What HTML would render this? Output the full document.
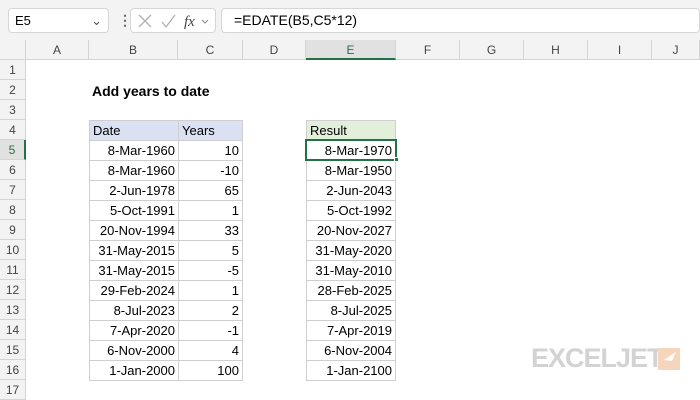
<!DOCTYPE html><html><head><style>
*{margin:0;padding:0;box-sizing:border-box}
body{width:700px;height:400px;overflow:hidden;background:#fff;font-family:"Liberation Sans",Calibri,sans-serif;font-size:13px;color:#000;position:relative}
.a{position:absolute}
.top{left:0;top:0;width:700px;height:40px;background:#f3f3f3}
.box{background:#fff;border:1px solid #d6d6d6;border-radius:4px}
.ch{top:40px;height:20px;background:#f3f3f3;border-right:1px solid #d4d4d4;border-bottom:1px solid #d4d4d4;text-align:center;line-height:20px;color:#444;font-size:12px}
.rh{left:0;width:26px;height:20px;background:#f3f3f3;border-bottom:1px solid #d4d4d4;border-right:1px solid #d4d4d4;text-align:center;line-height:20px;color:#444;font-size:12px}
.c{height:21px;border:1px solid #cfcfcf;line-height:19px;padding:0 3px;text-align:right;white-space:nowrap}
</style></head><body>
<div class="a top"></div>
<div class="a box" style="left:8px;top:8px;width:101px;height:25px;line-height:23px;padding-left:6px">E5<span class="a" style="right:6px;top:0;color:#555">&#8964;</span></div>
<div class="a" style="left:118px;top:12px;color:#666;font-size:14px;font-weight:bold">&#8942;</div>
<div class="a box" style="left:130px;top:8px;width:86px;height:25px"></div>
<svg class="a" style="left:134px;top:12px" width="80" height="18"><path d="M5 3l12 12M17 3L5 15" stroke="#b0b0b0" fill="none" stroke-width="1.3"/><path d="M28 10l4 5 9-12" stroke="#b0b0b0" fill="none" stroke-width="1.3"/><text x="50" y="14" font-family="Liberation Serif" font-style="italic" font-size="15" fill="#444">fx</text><path d="M68 8l3 3 3-3" stroke="#888" fill="none"/></svg>
<div class="a box" style="left:221px;top:8px;width:479px;height:25px;line-height:23px;padding-left:12px;font-size:14px">=EDATE(B5,C5*12)</div>
<div class="a" style="left:0;top:40px;width:26px;height:20px;background:#f3f3f3;border-right:1px solid #d4d4d4;border-bottom:1px solid #d4d4d4"></div>
<div class="a ch" style="left:26px;width:63px">A</div>
<div class="a ch" style="left:89px;width:89px">B</div>
<div class="a ch" style="left:178px;width:65px">C</div>
<div class="a ch" style="left:243px;width:63px">D</div>
<div class="a ch" style="left:306px;width:90px;background:#e1e1e1;border-bottom:2px solid #217346;color:#217346">E</div>
<div class="a ch" style="left:396px;width:64px">F</div>
<div class="a ch" style="left:460px;width:64px">G</div>
<div class="a ch" style="left:524px;width:64px">H</div>
<div class="a ch" style="left:588px;width:64px">I</div>
<div class="a ch" style="left:652px;width:48px">J</div>
<div class="a rh" style="top:60px">1</div><div class="a rh" style="top:80px">2</div><div class="a rh" style="top:100px">3</div><div class="a rh" style="top:120px">4</div>
<div class="a rh" style="top:140px;background:#e1e1e1;border-right:2px solid #217346;color:#217346">5</div>
<div class="a rh" style="top:160px">6</div><div class="a rh" style="top:180px">7</div><div class="a rh" style="top:200px">8</div><div class="a rh" style="top:220px">9</div><div class="a rh" style="top:240px">10</div><div class="a rh" style="top:260px">11</div><div class="a rh" style="top:280px">12</div><div class="a rh" style="top:300px">13</div><div class="a rh" style="top:320px">14</div><div class="a rh" style="top:340px">15</div><div class="a rh" style="top:360px">16</div><div class="a rh" style="top:380px">17</div>
<div class="a" style="left:92px;top:83px;font-weight:bold;font-size:14px">Add years to date</div>
<div class="a c" style="left:89px;top:120px;width:90px;text-align:left;background:#d9e1f2">Date</div>
<div class="a c" style="left:178px;top:120px;width:65px;text-align:left;background:#d9e1f2">Years</div>
<div class="a c" style="left:306px;top:120px;width:90px;text-align:left;background:#e2efda">Result</div>
<div id="rows"></div>
<div class="a" style="left:305px;top:139px;width:92px;height:22px;border:2px solid #217346"></div>
<div class="a" style="left:394px;top:157px;width:5px;height:5px;background:#217346;border:1px solid #fff"></div>
<div class="a" style="left:531px;top:343px;font-size:27px;font-weight:bold;color:#d3d3d3;letter-spacing:-1px">EXCELJET</div>
<div class="a" style="left:658px;top:348px;width:22px;height:22px;background:#f6d5bd"></div>
<svg class="a" style="left:658px;top:348px" width="22" height="22"><path d="M18 4L6 12l8 1z" fill="#fff"/></svg>
<script>
var d=[["8-Mar-1960","10","8-Mar-1970"],["8-Mar-1960","-10","8-Mar-1950"],["2-Jun-1978","65","2-Jun-2043"],["5-Oct-1991","1","5-Oct-1992"],["20-Nov-1994","33","20-Nov-2027"],["31-May-2015","5","31-May-2020"],["31-May-2015","-5","31-May-2010"],["29-Feb-2024","1","28-Feb-2025"],["8-Jul-2023","2","8-Jul-2025"],["7-Apr-2020","-1","7-Apr-2019"],["6-Nov-2000","4","6-Nov-2004"],["1-Jan-2000","100","1-Jan-2100"]];
var h="";d.forEach(function(r,i){var t=140+i*20;h+='<div class="a c" style="left:89px;top:'+t+'px;width:90px">'+r[0]+'</div><div class="a c" style="left:178px;top:'+t+'px;width:65px">'+r[1]+'</div><div class="a c" style="left:306px;top:'+t+'px;width:90px">'+r[2]+'</div>';});
document.getElementById("rows").outerHTML=h;
</script>
</body></html>
